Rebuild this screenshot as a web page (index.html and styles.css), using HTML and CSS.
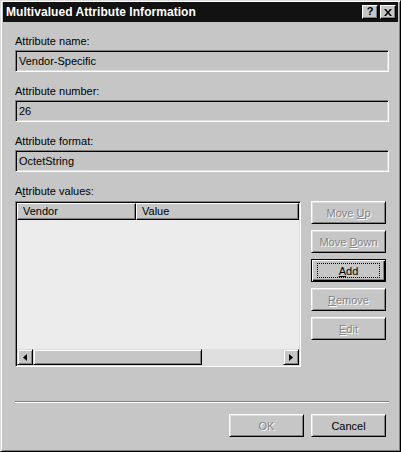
FILE: index.html
```html
<!DOCTYPE html>
<html>
<head>
<meta charset="utf-8">
<link rel="stylesheet" href="styles.css">
</head>
<body>
<div class="window">
  <div class="titlebar">
    <span class="title">Multivalued Attribute Information</span>
    <div class="tbtns">
      <span class="tbtn help">?</span>
      <span class="tbtn close"><svg width="8" height="7" viewBox="0 0 8 7"><path d="M0 0h2l2 2.5L6 0h2L5 3.5 8 7H6L4 4.5 2 7H0l3-3.5z" fill="#000"/></svg></span>
    </div>
  </div>
  <div class="content">
    <div class="field">
      <div class="label">Attribute name:</div>
      <div class="textbox">Vendor-Specific</div>
    </div>
    <div class="field">
      <div class="label">Attribute number:</div>
      <div class="textbox">26</div>
    </div>
    <div class="field">
      <div class="label">Attribute format:</div>
      <div class="textbox">OctetString</div>
    </div>
    <div class="field">
      <div class="label">A<u>t</u>tribute values:</div>
      <div class="values-row">
        <div class="list">
          <div class="list-head">
            <div class="hcell col1">Vendor</div>
            <div class="hcell col2">Value</div>
          </div>
          <div class="list-body"></div>
          <div class="hscroll">
            <div class="sbtn"><svg width="4" height="7" viewBox="0 0 4 7"><path d="M4 0v7L0 3.5z" fill="#000"/></svg></div>
            <div class="thumb"></div>
            <div class="track"></div>
            <div class="sbtn"><svg width="4" height="7" viewBox="0 0 4 7"><path d="M0 0v7l4-3.5z" fill="#000"/></svg></div>
          </div>
        </div>
        <div class="side-btns">
          <div class="btn disabled"><span>Move <u>U</u>p</span></div>
          <div class="btn disabled"><span>Move <u>D</u>own</span></div>
          <div class="btn default"><span class="focus"><span><u>A</u>dd</span></span></div>
          <div class="btn disabled"><span><u>R</u>emove</span></div>
          <div class="btn disabled"><span><u>E</u>dit</span></div>
        </div>
      </div>
    </div>
    <div class="separator"></div>
    <div class="footer">
      <div class="btn disabled"><span>OK</span></div>
      <div class="btn"><span>Cancel</span></div>
    </div>
  </div>
</div>
</body>
</html>
```

FILE: styles.css
```css
* { box-sizing: border-box; }
html, body { margin: 0; padding: 0; background: #c6c6c6; }
body { width: 401px; height: 452px; overflow: hidden; font-family: "Liberation Sans", Arial, sans-serif; font-size: 11px; color: #000; }

.window {
  width: 401px; height: 452px;
  background: #c6c6c6;
  border: 1px solid; border-color: #dcdcdc #000 #000 #dcdcdc;
  box-shadow: inset 1px 1px 0 #fff, inset -1px -1px 0 #808080;
  padding: 1px 2px 2px 2px;
  display: flex; flex-direction: column;
}

.titlebar {
  height: 20px;
  background: #121212;
  display: flex; align-items: center; justify-content: space-between;
  padding: 0 2px 0 3px;
}
.title { color: #fff; font-weight: bold; font-size: 12px; letter-spacing: 0.05px; }
.tbtns { display: flex; gap: 2px; }
.tbtn {
  width: 16px; height: 14px;
  background: #c6c6c6;
  border: 1px solid; border-color: #fff #000 #000 #fff;
  box-shadow: inset -1px -1px 0 #808080;
  display: flex; align-items: center; justify-content: center;
  font-weight: bold; font-size: 11px; line-height: 1;
}
.help { padding-bottom: 1px; }

.content { padding: 13px 12px 0 12px; display: flex; flex-direction: column; flex: 1; }
.field { display: flex; flex-direction: column; margin-bottom: 13px; }
.label { height: 13px; line-height: 13px; margin-bottom: 2px; }
.textbox {
  height: 22px; width: 374px;
  background: #c4c4c4;
  border: 1px solid; border-color: #808080 #fff #fff #808080;
  box-shadow: inset 1px 1px 0 #000, inset -1px -1px 0 #dcdcdc;
  padding: 0 3px;
  line-height: 20px;
}

.values-row { display: flex; margin-top: 1px; }
.list {
  width: 288px; height: 166px;
  border: 1px solid; border-color: #808080 #fff #fff #808080;
  box-shadow: inset 1px 1px 0 #000, inset -1px -1px 0 #dcdcdc;
  padding: 1px;
  display: flex; flex-direction: column;
}
.list-head { display: flex; height: 17px; background: #c6c6c6; }
.hcell {
  height: 17px;
  border: 1px solid; border-color: #fff #000 #000 #fff;
  box-shadow: inset -1px -1px 0 #808080;
  padding-left: 5px; line-height: 14px;
}
.col1 { width: 119px; }
.col2 { flex: 1; }
.list-body { flex: 1; background: #ececec; }
.hscroll { height: 16px; display: flex; background: #c6c6c6; }
.sbtn {
  width: 16px; height: 16px;
  border: 1px solid; border-color: #dcdcdc #000 #000 #dcdcdc;
  box-shadow: inset 1px 1px 0 #fff, inset -1px -1px 0 #808080;
  display: flex; align-items: center; justify-content: center;
}
.thumb {
  width: 169px;
  border: 1px solid; border-color: #dcdcdc #000 #000 #dcdcdc;
  box-shadow: inset 1px 1px 0 #fff, inset -1px -1px 0 #808080;
}
.track { flex: 1; background: #dedede; }

.side-btns { display: flex; flex-direction: column; gap: 6px; margin-left: 10px; }
.btn {
  width: 75px; height: 23px;
  background: #c6c6c6;
  border: 1px solid; border-color: #fff #000 #000 #fff;
  box-shadow: inset 1px 1px 0 #dcdcdc, inset -1px -1px 0 #808080;
  display: flex; align-items: center; justify-content: center;
  font-size: 11px;
}
.btn.disabled { color: #848484; text-shadow: 1px 1px 0 #fff; }
.btn.default {
  border: 1px solid #000;
  box-shadow: inset 1px 1px 0 #fff, inset -1px -1px 0 #000, inset -2px -2px 0 #808080;
}
.focus {
  width: 63px; height: 15px;
  border: 1px dotted #000;
  display: flex; align-items: center; justify-content: center;
}

.separator {
  margin-top: 21px;
  height: 2px; width: 374px;
  border-top: 1px solid #808080; border-bottom: 1px solid #fff;
}
.footer { display: flex; justify-content: flex-end; gap: 7px; margin-top: 11px; }
```
